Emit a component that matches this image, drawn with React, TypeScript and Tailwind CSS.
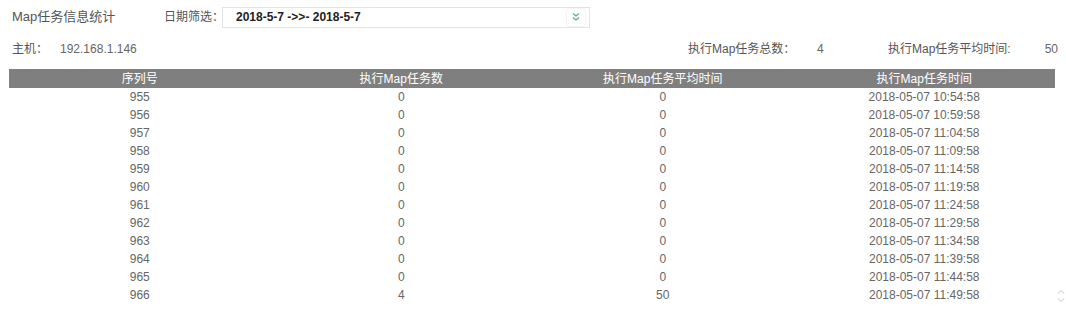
import React from 'react';

const rows = [
  { id: 955, count: 0, avg: 0, time: '2018-05-07 10:54:58' },
  { id: 956, count: 0, avg: 0, time: '2018-05-07 10:59:58' },
  { id: 957, count: 0, avg: 0, time: '2018-05-07 11:04:58' },
  { id: 958, count: 0, avg: 0, time: '2018-05-07 11:09:58' },
  { id: 959, count: 0, avg: 0, time: '2018-05-07 11:14:58' },
  { id: 960, count: 0, avg: 0, time: '2018-05-07 11:19:58' },
  { id: 961, count: 0, avg: 0, time: '2018-05-07 11:24:58' },
  { id: 962, count: 0, avg: 0, time: '2018-05-07 11:29:58' },
  { id: 963, count: 0, avg: 0, time: '2018-05-07 11:34:58' },
  { id: 964, count: 0, avg: 0, time: '2018-05-07 11:39:58' },
  { id: 965, count: 0, avg: 0, time: '2018-05-07 11:44:58' },
  { id: 966, count: 4, avg: 50, time: '2018-05-07 11:49:58' },
];

const App: React.FC = () => {
  return (
    <div className="relative w-[1066px] h-[310px] overflow-hidden bg-white text-[#666] text-xs font-['Liberation_Sans','Noto_Sans_CJK_SC',sans-serif]">
      {/* 筛选栏 */}
      <div className="flex items-center h-[20px] mt-[7px] pl-3 whitespace-nowrap">
        <div className="w-[152px] shrink-0 text-[13px] text-[#555]">Map任务信息统计</div>
        <div className="w-[58px] shrink-0 text-[#555]">日期筛选：</div>
        <div className="flex items-center shrink-0 w-[368px] h-[21px] border border-[#e3e3e3] pl-[13px] pr-[4px]">
          <span className="flex-1 font-bold text-[#222]">2018-5-7 -&gt;&gt;- 2018-5-7</span>
          <button className="flex items-center justify-center w-[18px] h-[17px] rounded-[2px] bg-white shadow-[0_0_2px_rgba(0,0,0,0.15)]">
            <svg width="10" height="10" viewBox="0 0 10 10" fill="none" stroke="#55b07f" strokeWidth="1.3">
              <path d="M2 1.5 L5 4 L8 1.5" />
              <path d="M2 5.5 L5 8 L8 5.5" />
            </svg>
          </button>
        </div>
      </div>

      {/* 主机信息 */}
      <div className="flex items-center h-[16px] mt-[14px] pl-3 pr-[8px] whitespace-nowrap">
        <span className="w-[48px] text-[#555]">主机：</span>
        <span>192.168.1.146</span>
        <span className="ml-auto w-[129px] text-[#555]">执行Map任务总数：</span>
        <span className="w-[71px]">4</span>
        <span className="w-[155px] text-[#555]">执行Map任务平均时间:</span>
        <span className="w-[15px] text-right">50</span>
      </div>

      {/* 表格 */}
      <div className="mt-[12px] ml-[9px] w-[1046px]">
        <div className="grid grid-cols-4 h-[19px] items-center bg-[#7f7f7f] text-white text-center">
          <div>序列号</div>
          <div>执行Map任务数</div>
          <div>执行Map任务平均时间</div>
          <div>执行Map任务时间</div>
        </div>
        {rows.map((r) => (
          <div key={r.id} className="grid grid-cols-4 h-[18px] items-center text-center">
            <div>{r.id}</div>
            <div>{r.count}</div>
            <div>{r.avg}</div>
            <div>{r.time}</div>
          </div>
        ))}
      </div>

      {/* 回到顶部 */}
      <div className="absolute right-[1px] top-[289px]">
        <svg width="8" height="14" viewBox="0 0 8 14" fill="none" stroke="#c4c4c4" strokeWidth="1">
          <path d="M1 4.5 L4 1.5 L7 4.5" />
          <path d="M1 9.5 L4 12.5 L7 9.5" />
        </svg>
      </div>
    </div>
  );
};

export default App;
